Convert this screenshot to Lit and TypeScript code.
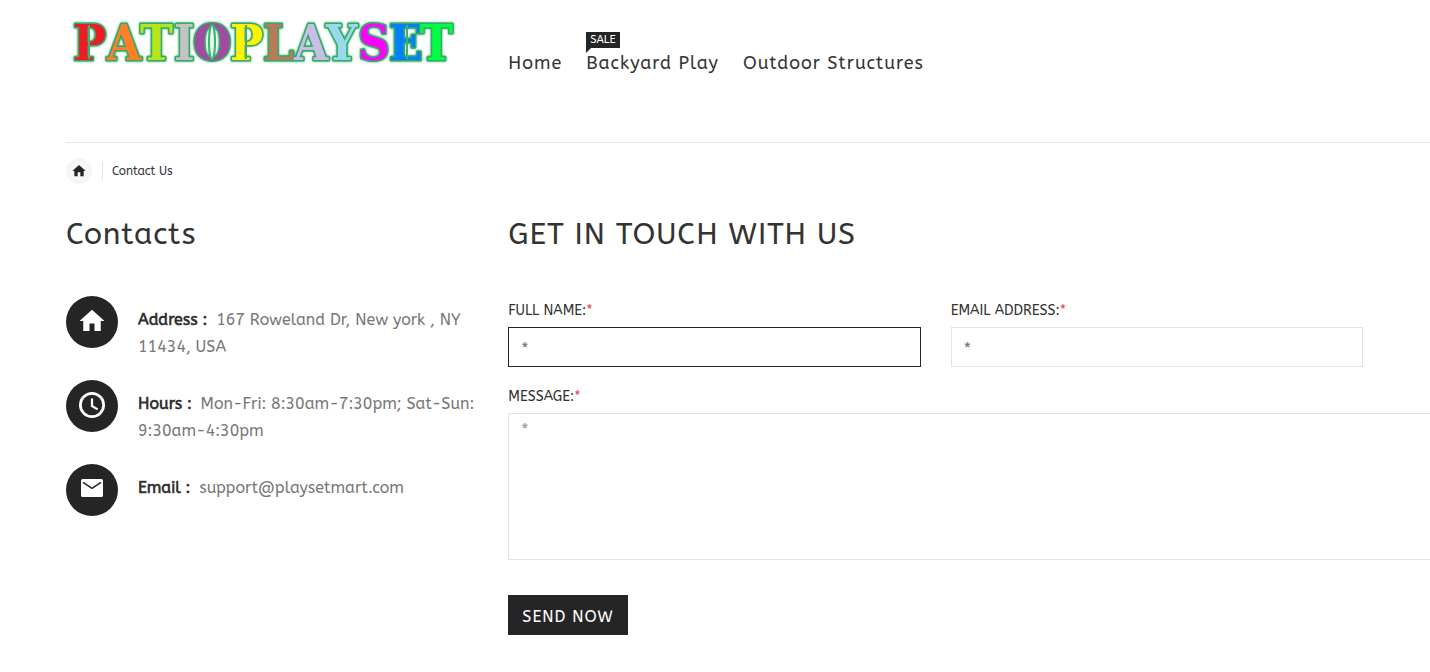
import { LitElement, html, css, svg } from "lit";
import { customElement } from "lit/decorators.js";

const LOGO: Array<[string, string, number]> = [
  ["P", "#ed1c24", 7], ["A", "#ff7f27", 41], ["T", "#b5e61d", 74], ["I", "#c3c3c3", 108],
  ["O", "#a349a4", 127], ["P", "#fff200", 164], ["L", "#b97a57", 197], ["A", "#c8bfe7", 228],
  ["Y", "#99d9ea", 260], ["S", "#ff00ff", 292], ["E", "#0080ff", 323], ["T", "#00ff40", 354],
];

const homePath = svg`<path d="M10 20v-6h4v6h5v-8h3L12 3 2 12h3v8z"/>`;
const clockPath = svg`
  <circle cx="12" cy="12" r="9.300" fill="none" stroke="#fff" stroke-width="2.200"/>
  <path d="M12 6.800v6l4.500 2.700" fill="none" stroke="#fff" stroke-width="1.800"/>`;
const mailPath = svg`
  <rect x="3.200" y="4" width="17.600" height="14.400" rx="1.300"/>
  <path d="M4.800 6.700 12 11.500l7.200-4.800" fill="none" stroke="#252525" stroke-width="1.200"/>`;

const CONTACTS = [
  { icon: homePath, label: "Address :", text: "167 Roweland Dr, New york , NY 11434, USA" },
  { icon: clockPath, label: "Hours :", text: "Mon-Fri: 8:30am-7:30pm; Sat-Sun: 9:30am-4:30pm" },
  { icon: mailPath, label: "Email :", text: "support@playsetmart.com" },
];

@customElement("app-root")
export class AppRoot extends LitElement {
  static styles = css`
    :host {
      display: block;
      overflow-x: hidden;
      min-height: 100vh;
      background: #fff;
      color: #333;
      font-family: ABeeZee, "Noto Sans", sans-serif;
      font-size: 16px;
    }
    * { box-sizing: border-box; }
    a { color: inherit; text-decoration: none; }
    .page { padding: 0 67px 0 66px; }
    .columns {
      display: grid;
      grid-template-columns: repeat(3, minmax(0, 1fr));
      column-gap: 30px;
    }
    .wide { grid-column: span 2; }
    .bleed { margin-right: -70px; }
    .header { height: 142px; }
    .logo { display: block; }
    .logo svg { display: block; width: 400px; height: 84px; overflow: visible; }
    .wordmark {
      font-family: "DejaVu Serif Condensed", "DejaVu Serif", serif;
      font-weight: bold;
      font-size: 49px;
      paint-order: stroke;
      stroke: #35a96a;
      stroke-width: 3px;
      stroke-linejoin: round;
      filter: drop-shadow(0 0 1px #3cb371);
    }
    .cuts { fill: none; stroke: #3cb371; stroke-width: 2px; }
    .slot { fill: #e8f7ee; stroke: #3cb371; stroke-width: 2px; }
    .nav { display: flex; gap: 24px; padding-top: 50px; }
    .nav a { position: relative; font-size: 18px; line-height: 26px; letter-spacing: 1px; white-space: nowrap; }
    .badge {
      position: absolute;
      left: 0;
      top: -18px;
      height: 16px;
      padding: 0 4px;
      background: #252525;
      color: #fff;
      font-size: 11px;
      line-height: 16px;
      letter-spacing: 0;
    }
    .badge::after {
      content: "";
      position: absolute;
      left: 0;
      top: 100%;
      border-top: 5px solid #252525;
      border-right: 5px solid transparent;
    }
    .rule { border: 0; border-top: 1px solid #e5e5e5; margin-top: 0; margin-bottom: 15px; }
    .crumbs { display: flex; align-items: center; font-size: 12px; line-height: 18px; }
    .crumb-home {
      display: grid;
      place-items: center;
      width: 26px;
      height: 26px;
      border-radius: 50%;
      background: #f5f5f5;
    }
    .crumb-home svg { width: 16px; height: 16px; fill: #252525; }
    .crumb-here { margin-left: 10px; padding-left: 9px; border-left: 1px solid #e5e5e5; }
    h1, h2 { margin: 30px 0 0; font-size: 30px; line-height: 40px; font-weight: 400; letter-spacing: 1px; }
    .contacts { list-style: none; margin: 42px 0 0; padding: 0; display: grid; gap: 16px; }
    .contact { display: flex; gap: 20px; min-height: 68px; color: #777; }
    .disc {
      flex: none;
      display: grid;
      place-items: center;
      width: 52px;
      height: 52px;
      padding-bottom: 2px;
      border-radius: 50%;
      background: #252525;
    }
    .disc svg { width: 30px; height: 30px; fill: #fff; }
    .contact p { margin: 0; padding-top: 10px; line-height: 27px; }
    .contact strong { margin-right: 4px; color: #333; font-weight: 700; }
    .form { margin-top: 47px; }
    .pair { display: grid; grid-template-columns: 1fr 1fr; gap: 30px; }
    .field { display: flex; flex-direction: column; gap: 6px; }
    label { font-size: 14px; line-height: 20px; }
    .req { color: #e8464f; }
    input, textarea {
      display: block;
      width: 100%;
      margin: 0;
      border: 1px solid #e2e2e2;
      border-radius: 0;
      outline: none;
      background: #fff;
      color: #333;
      font: inherit;
      padding: 0 12px;
    }
    input { height: 40px; padding-top: 2px; }
    .current { border-color: #252525; }
    textarea { height: 147px; padding: 6px 12px; resize: none; line-height: 20px; }
    ::placeholder { color: #777; opacity: 1; }
    textarea::placeholder { color: #999; }
    .message { margin-top: 20px; }
    .send {
      display: block;
      height: 40px;
      margin-top: 35px;
      padding: 2px 14px 0;
      border: 0;
      background: #252525;
      color: #fff;
      font: inherit;
      font-weight: 500;
      letter-spacing: 1px;
    }
  `;

  private icon(shape: unknown) {
    return html`<svg viewBox="0 0 24 24" aria-hidden="true">${shape}</svg>`;
  }

  render() {
    return html`
      <div class="page">
        <header class="header columns">
          <a class="logo" href="#" aria-label="Patioplayset">
            <svg viewBox="0 0 400 84">
              <text class="wordmark" y="60">${LOGO.map(([c, fill, x]) => svg`<tspan x=${x} fill=${fill}>${c}</tspan>`)}</text>
              <path class="cuts" d="M23 25v34M180 25v34M341 25v34"/>
              <ellipse class="slot" cx="146" cy="42" rx="3" ry="17"/>
            </svg>
          </a>
          <nav class="nav wide">
            <a href="#">Home</a>
            <a href="#"><span class="badge">SALE</span>Backyard Play</a>
            <a href="#">Outdoor Structures</a>
          </nav>
        </header>
        <hr class="rule bleed" />
        <nav class="crumbs" aria-label="Breadcrumb">
          <a class="crumb-home" href="#" aria-label="Home">${this.icon(homePath)}</a>
          <span class="crumb-here">Contact Us</span>
        </nav>
        <main class="columns">
          <section>
            <h1>Contacts</h1>
            <ul class="contacts">
              ${CONTACTS.map((c) => html`
                <li class="contact">
                  <span class="disc">${this.icon(c.icon)}</span>
                  <p><strong>${c.label}</strong> ${c.text}</p>
                </li>`)}
            </ul>
          </section>
          <section class="wide">
            <h2>GET IN TOUCH WITH US</h2>
            <form class="form">
              <div class="pair">
                <div class="field">
                  <label for="name">FULL NAME:<span class="req">*</span></label>
                  <input id="name" class="current" type="text" placeholder="*" />
                </div>
                <div class="field">
                  <label for="email">EMAIL ADDRESS:<span class="req">*</span></label>
                  <input id="email" type="email" placeholder="*" />
                </div>
              </div>
              <div class="field message bleed">
                <label for="message">MESSAGE:<span class="req">*</span></label>
                <textarea id="message" placeholder="*"></textarea>
              </div>
              <button class="send" type="button">SEND NOW</button>
            </form>
          </section>
        </main>
      </div>
    `;
  }
}
